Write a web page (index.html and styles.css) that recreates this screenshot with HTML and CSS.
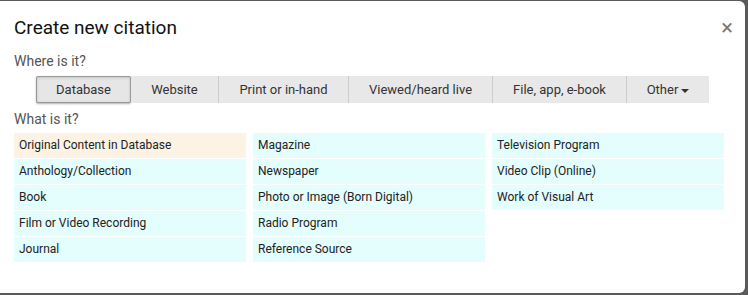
FILE: index.html
```html
<!DOCTYPE html>
<html lang="en">

<head>
    <meta charset="UTF-8">
    <meta name="viewport" content="width=device-width, initial-scale=1.0">
    <title>Create new citation</title>
    <link rel="stylesheet" href="styles.css">
</head>

<body>
    <div class="modal">
        <div class="modal-header">
            <h1>Create new citation</h1>
            <span class="close">&times;</span>
        </div>
        <p class="label">Where is it?</p>
        <div class="btn-group">
            <button class="btn active">Database</button>
            <button class="btn">Website</button>
            <button class="btn">Print or in-hand</button>
            <button class="btn">Viewed/heard live</button>
            <button class="btn">File, app, e-book</button>
            <button class="btn">Other<span class="caret"></span></button>
        </div>
        <p class="label what">What is it?</p>
        <div class="types">
            <div class="col">
                <div class="type original">Original Content in Database</div>
                <div class="type">Anthology/Collection</div>
                <div class="type">Book</div>
                <div class="type">Film or Video Recording</div>
                <div class="type">Journal</div>
            </div>
            <div class="col">
                <div class="type">Magazine</div>
                <div class="type">Newspaper</div>
                <div class="type">Photo or Image (Born Digital)</div>
                <div class="type">Radio Program</div>
                <div class="type">Reference Source</div>
            </div>
            <div class="col">
                <div class="type">Television Program</div>
                <div class="type">Video Clip (Online)</div>
                <div class="type">Work of Visual Art</div>
            </div>
        </div>
    </div>
</body>

</html>
```

FILE: styles.css
```css
body {
    background-color: #5a5a5a;
    font-family: Roboto, "Liberation Sans", sans-serif;
    margin: 0;
    padding: 0;
}

.modal {
    background-color: #fff;
    width: 745px;
    height: 292px;
    margin: 1px 0 0 0;
    border-radius: 0 6px 6px 0;
    box-sizing: border-box;
    padding: 0 14px;
    overflow: hidden;
}

.modal-header {
    display: flex;
    justify-content: space-between;
    align-items: center;
    padding-top: 15px;
}

.modal-header h1 {
    font-size: 19px;
    font-weight: 400;
    color: #111;
    margin: 0;
}

.close {
    color: #777;
    font-size: 22px;
    font-weight: 400;
    margin-right: -2px;
    line-height: 20px;
}

.label {
    color: #555;
    font-size: 14px;
    margin: 14px 0 7px 0;
}

.label.what {
    margin: 8px 0 6px 0;
}

.btn-group {
    display: flex;
    margin-left: 22px;
    width: 673px;
    background-color: #e8e8e8;
}

.btn {
    font-family: inherit;
    font-size: 13px;
    color: #333;
    background-color: #e8e8e8;
    border: none;
    border-left: 1px solid #ccc;
    height: 27px;
    padding: 0;
    white-space: nowrap;
    flex: 0 0 auto;
}

.btn:nth-child(2) {
    border-left: none;
    width: 87px;
}

.btn:nth-child(3) {
    width: 130px;
}

.btn:nth-child(4) {
    width: 144px;
}

.btn:nth-child(5) {
    width: 134px;
}

.btn:nth-child(6) {
    width: 83px;
}

.btn.active {
    width: 95px;
    border: 1px solid #999;
    border-radius: 2px;
    box-shadow: inset 0 1px 3px rgba(0, 0, 0, 0.15), 0 1px 2px rgba(0, 0, 0, 0.3);
    background-color: #e6e6e6;
}

.caret {
    display: inline-block;
    width: 0;
    height: 0;
    border-left: 4px solid transparent;
    border-right: 4px solid transparent;
    border-top: 4px solid #333;
    vertical-align: middle;
    margin-left: 3px;
}

.types {
    display: flex;
    gap: 7px;
}

.col {
    width: 232px;
    display: flex;
    flex-direction: column;
    gap: 1px;
}

.type {
    background-color: #e4fdfd;
    height: 25px;
    line-height: 25px;
    padding: 0 5px;
    font-size: 12px;
    color: #222;
}

.type.original {
    background-color: #fdf3e4;
}
```
